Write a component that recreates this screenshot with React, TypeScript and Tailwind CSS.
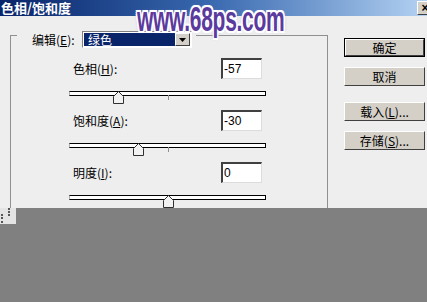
import React from 'react';

const groups = [
  { label: '色相', key: 'H', value: '-57', thumb: 'left-[44px]', notch: true },
  { label: '饱和度', key: 'A', value: '-30', thumb: 'left-[64px]', notch: true },
  { label: '明度', key: 'I', value: '0', thumb: 'left-[94px]', notch: false },
];

function NumBox({ value }: { value: string }) {
  return (
    <div className="w-[41px] h-[21px] border-t-2 border-l-2 border-b border-r border-t-[#404040] border-l-[#404040] border-b-[#dcdcdc] border-r-[#dcdcdc] bg-white pl-[1px] text-[12px] leading-[18px] text-black font-['Liberation_Sans',sans-serif]">
      {value}
    </div>
  );
}

function Slider({ thumb, notch }: { thumb: string; notch: boolean }) {
  return (
    <div className="relative h-[13px] w-[197px] mt-[12px]">
      <div className="mt-[4px] h-[5px] border border-black border-l-[#b0b0b0] bg-white" />
      {notch && <div className="absolute left-[99px] top-[4px] h-[5px] w-px bg-[#909090]" />}
      <svg className={`absolute top-0 ${thumb}`} width="11" height="13" viewBox="0 0 11 13">
        <polygon points="0.5,5.5 5.5,0.5 10.5,5.5 10.5,12.5 0.5,12.5" fill="#f2f2f2" stroke="#303030" />
      </svg>
    </div>
  );
}

function Btn({ children, isDefault }: { children: React.ReactNode; isDefault?: boolean }) {
  return (
    <div className={`h-[19px] w-[81px] ${isDefault ? 'border border-black' : ''}`}>
      <div className="h-full flex items-center justify-center border border-t-white border-l-white border-b-[#404040] border-r-[#404040] bg-[#d4d0c8] text-[12px] leading-none text-black">
        {children}
      </div>
    </div>
  );
}

export default function App() {
  return (
    <div className="relative w-[427px] h-[302px] overflow-hidden bg-[#808080] font-['Noto_Sans_CJK_SC',sans-serif]">
      {/* title bar */}
      <div className="flex h-[16px] bg-gradient-to-r from-[#0a246a] via-[#3a6ab0] to-[#b4d2f2]">
        <span className="pl-px text-[13px] leading-[16px] font-bold text-white">色相/饱和度</span>
        <div className="ml-auto mr-[-6px] mt-[1px] h-[14px] w-[16px] shrink-0 bg-[#d4d0c8] border border-t-white border-l-white border-b-[#404040] border-r-[#404040] flex items-center justify-center text-[12px] leading-none font-bold text-black font-['Liberation_Sans',sans-serif]">
          ×
        </div>
      </div>

      {/* dialog body */}
      <div className="flex h-[192px] overflow-hidden bg-[#eeeeee] pl-[10px] pt-[15px]">
        <div className="w-[318px] shrink-0">
          <div className="flex h-[17px]">
            <div className="mt-[4px] w-[7px] border-l border-t border-[#909090]" />
            <span className="ml-[15px] w-[50px] text-[12px] leading-[17px] text-black">
              编辑(<span className="underline">E</span>):
            </span>
            <div className="flex w-[110px] h-[17px] border border-t-[#808080] border-l-[#808080] border-b-white border-r-white bg-white p-px">
              <div className="flex-1 bg-[#0a246a] pl-[4px] text-[12px] leading-[13px] text-white">绿色</div>
              <div className="w-[15px] flex items-center justify-center bg-[#d4d0c8] border border-t-white border-l-white border-b-[#404040] border-r-[#404040]">
                <svg width="7" height="4" viewBox="0 0 7 4">
                  <polygon points="0,0 7,0 3.5,4" fill="#000" />
                </svg>
              </div>
            </div>
            <div className="ml-[4px] mt-[4px] flex-1 border-t border-r border-[#909090]" />
          </div>
          <div className="h-[200px] border-l border-r border-[#909090] pl-[58px] pt-[10px]">
            {groups.map((g, i) => (
              <div key={g.key} className={i > 0 ? 'mt-[6px]' : ''}>
                <div className="flex h-[21px] items-center">
                  <span className="w-[152px] pl-[4px] text-[12px] leading-none text-black">
                    {g.label}(<span className="underline">{g.key}</span>):
                  </span>
                  <NumBox value={g.value} />
                </div>
                <Slider thumb={g.thumb} notch={g.notch} />
              </div>
            ))}
          </div>
        </div>

        <div className="ml-[16px] flex flex-col pt-[7px]">
          <Btn isDefault>确定</Btn>
          <div className="mt-[10px]">
            <Btn>取消</Btn>
          </div>
          <div className="mt-[16px]">
            <Btn>
              载入(<span className="underline">L</span>)...
            </Btn>
          </div>
          <div className="mt-[10px]">
            <Btn>
              存储(<span className="underline">S</span>)...
            </Btn>
          </div>
        </div>
      </div>

      {/* grip remnant */}
      <div className="flex h-[16px] w-[16px] bg-[#e4e4e4]">
        <div className="mt-[6px] ml-[1px] h-[9px] w-[3px] border-l-2 border-dotted border-[#555]" />
        <div className="ml-[4px] h-[8px] w-[3px] border-l-2 border-dotted border-[#555]" />
      </div>

      {/* watermark */}
      <div className="absolute left-[137px] top-[1px] origin-left scale-x-[0.6] whitespace-nowrap text-[35px] leading-[35px] font-bold tracking-[-0.5px] text-[#5b3a9e] font-['Liberation_Sans',sans-serif] [text-shadow:2px_0_0_#fff,-2px_0_0_#fff,0_2px_0_#fff,0_-2px_0_#fff,2px_2px_0_#fff,-2px_-2px_0_#fff,2px_-2px_0_#fff,-2px_2px_0_#fff,0_0_5px_#b0a0e0]">
        www.68ps.com
      </div>
    </div>
  );
}
